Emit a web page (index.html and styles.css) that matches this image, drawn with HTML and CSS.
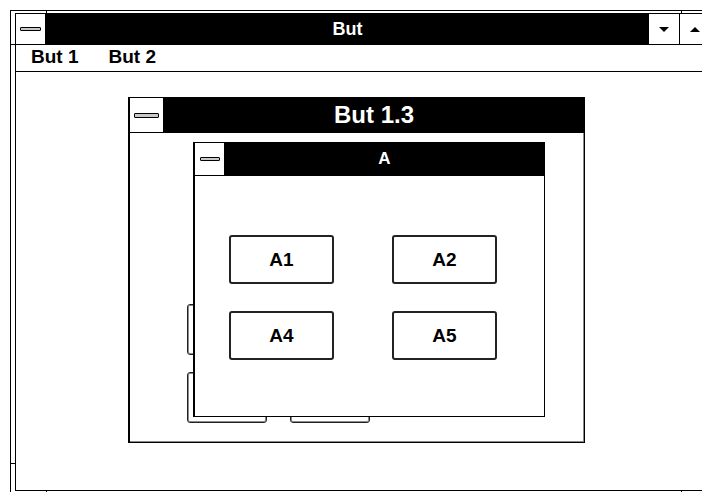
FILE: index.html
```html
<!DOCTYPE HTML>
<html>
<head>
  <title>But</title>
  <meta charset="utf-8">
  <link rel="stylesheet" href="styles.css">
</head>
<body>
  <div class="screen">

    <div class="main">
      <span class="tick tick-v" style="left: 35px; top: -1px"></span>
      <span class="tick tick-v" style="left: 670px; top: -1px"></span>
      <span class="tick tick-h" style="left: -1px; top: 33px"></span>
      <span class="tick tick-h" style="left: -1px; top: 452px"></span>
      <span class="tick tick-v" style="left: 35px; top: 480px"></span>
      <span class="tick tick-v" style="left: 670px; top: 480px"></span>

      <div class="main-inner">
        <div class="titlebar">
          <div class="sysbox"><span class="sysbar"></span></div>
          <div class="caption">But</div>
          <div class="sizebox"><span class="arrow-down"></span></div>
          <div class="sizebox"><span class="arrow-up"></span></div>
        </div>
        <div class="menubar">
          <span class="menu-item">But 1</span>
          <span class="menu-item">But 2</span>
        </div>
        <div class="client"></div>
      </div>
    </div>

    <div class="win win-big">
      <div class="titlebar titlebar-big">
        <div class="sysbox"><span class="sysbar"></span></div>
        <div class="caption">But 1.3</div>
      </div>
      <div class="pane pane-big">
        <div class="btn btn-back"></div>
        <div class="btn btn-back"></div>
        <div class="btn btn-back"></div>
        <div class="btn btn-back"></div>
      </div>
    </div>

    <div class="win win-a">
      <div class="titlebar titlebar-a">
        <div class="sysbox"><span class="sysbar"></span></div>
        <div class="caption">A</div>
      </div>
      <div class="pane pane-a">
        <div class="btn">A1</div>
        <div class="btn">A2</div>
        <div class="btn">A4</div>
        <div class="btn">A5</div>
      </div>
    </div>

  </div>
</body>
</html>
```

FILE: styles.css
```css
html, body{
  margin: 0; padding: 0;
}
body{
  background: #fff;
  color: #000;
  font-family: "Liberation Sans", Arial, sans-serif;
  font-weight: bold;
}
.screen{
  position: relative;
  width: 702px;
  height: 492px;
  overflow: hidden;
  background: #fff;
}

/* outer, sizable window */
.main{
  position: absolute;
  left: 10px;
  top: 10px;
  width: 707px;
  height: 486px;
  box-sizing: border-box;
  border: 1px solid #000;
  padding: 2px 4px 4px 4px;
  background: #fff;
}
.main-inner{
  height: 100%;
  box-sizing: border-box;
  border: 1px solid #000;
  display: flex;
  flex-direction: column;
}
.tick{
  position: absolute;
  background: #000;
}
.tick-v{ width: 1px; height: 4px; }
.tick-h{ width: 5px; height: 1px; }

.titlebar{
  display: flex;
  height: 30px;
  border-bottom: 1px solid #000;
  flex: none;
}
.sysbox{
  width: 29px;
  background: #fff;
  border-right: 1px solid #000;
  display: flex;
  align-items: center;
  justify-content: center;
}
.sysbar{
  width: 19px;
  height: 2px;
  border: 1px solid #000;
  border-radius: 1px;
  background: #c8c8c8;
}
.caption{
  flex: 1;
  background: #000;
  color: #fff;
  font-size: 18px;
  display: flex;
  align-items: center;
  justify-content: center;
}
.sizebox{
  width: 30px;
  background: #fff;
  border-right: 1px solid #000;
  display: flex;
  align-items: center;
  justify-content: center;
}
.arrow-down{
  width: 0; height: 0;
  border-left: 5px solid transparent;
  border-right: 5px solid transparent;
  border-top: 5px solid #000;
}
.arrow-up{
  width: 0; height: 0;
  border-left: 5px solid transparent;
  border-right: 5px solid transparent;
  border-bottom: 5px solid #000;
}
.menubar{
  height: 27px;
  border-bottom: 1px solid #000;
  display: flex;
  align-items: center;
  gap: 30px;
  padding-left: 15px;
  padding-bottom: 3px;
  box-sizing: border-box;
  font-size: 19px;
  flex: none;
}
.client{
  flex: 1;
}

/* child windows */
.win{
  position: absolute;
  background: #fff;
  box-sizing: border-box;
  display: flex;
  flex-direction: column;
}
.win-big{
  left: 128px;
  top: 97px;
  width: 457px;
  height: 346px;
  border: 2px solid #000;
  border-right-width: 1px;
  border-bottom-width: 1px;
  box-shadow: inset -1px -1px 0 #8a8a8a;
}
.titlebar-big{
  height: 34px;
  margin-top: -1px;
}
.titlebar-big .sysbox{
  width: 33px;
}
.titlebar-big .sysbar{
  width: 23px;
  height: 3px;
}
.titlebar-big .caption{
  font-size: 24px;
}
.win-a{
  left: 193px;
  top: 142px;
  width: 352px;
  height: 275px;
  border: 1px solid #000;
  border-left-width: 2px;
}
.titlebar-a{
  height: 32px;
}
.titlebar-a .sysbox{
  width: 29px;
}
.titlebar-a .sysbar{
  width: 18px;
  height: 2px;
}
.titlebar-a .caption{
  font-size: 17px;
}

.pane{
  display: grid;
}
.pane-big{
  grid-template-columns: 80px 80px;
  grid-auto-rows: 51px;
  column-gap: 23px;
  row-gap: 17px;
  padding: 171px 0 0 57px;
}
.pane-a{
  grid-template-columns: 105px 105px;
  grid-auto-rows: 49px;
  column-gap: 58px;
  row-gap: 27px;
  padding: 59px 0 0 34px;
}
.btn{
  box-sizing: border-box;
  border: 2px solid #222;
  border-radius: 3px;
  background: #fff;
  font-size: 19px;
  display: flex;
  align-items: center;
  justify-content: center;
}
.btn-back{
  border-width: 1px;
  box-shadow: inset 0 0 0 1px #8a8a8a;
}
```
